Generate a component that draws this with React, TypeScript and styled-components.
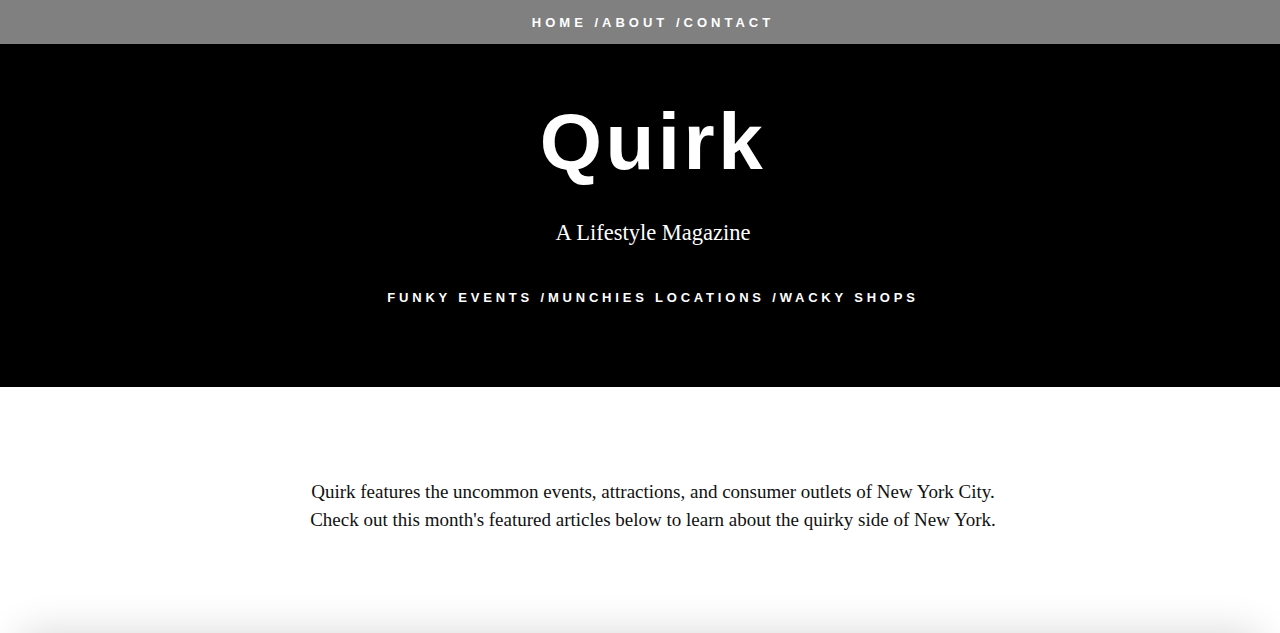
import React from "react";
import styled, { createGlobalStyle } from "styled-components";

const Global = createGlobalStyle`
  html, body { margin: 0; padding: 0; background: #fff; }
  body { font-family: "Liberation Serif", serif; overflow-x: hidden; }
`;

const TopNav = styled.nav`
  height: 44px;
  background: #808080;
  display: flex;
  align-items: center;
  justify-content: center;
  padding-left: 26px;
`;

const NavList = styled.ul<{ $spacing?: number }>`
  list-style: none;
  margin: 0;
  padding: 0;
  display: flex;
  font-family: "Liberation Sans", Arial, sans-serif;
  font-weight: 700;
  font-size: 13px;
  letter-spacing: ${(p) => p.$spacing ?? 4}px;
  color: #fff;
  text-transform: uppercase;
`;

const NavItem = styled.li`
  white-space: pre;
`;

const Hero = styled.header`
  background: #000;
  color: #fff;
  height: 343px;
  display: flex;
  flex-direction: column;
  align-items: center;
  padding: 51px 0 0 26px;
  box-sizing: border-box;
`;

const Title = styled.h1`
  margin: 0;
  font-family: "Liberation Sans", Arial, sans-serif;
  font-weight: 700;
  font-size: 80px;
  letter-spacing: 3.5px;
  line-height: 94px;
`;

const Subtitle = styled.p`
  margin: 32px 0 0;
  font-family: "Liberation Serif", serif;
  font-size: 22.5px;
  line-height: 24px;
`;

const SubNavWrap = styled.div`
  margin-top: 45px;
`;

const Intro = styled.section`
  padding: 91px 20px 0 46px;
  height: 220px;
  box-sizing: border-box;
  text-align: center;
`;

const IntroText = styled.p`
  margin: 0;
  font-family: "Liberation Serif", serif;
  font-size: 19px;
  line-height: 28px;
  color: #111;
`;

const Card = styled.section`
  margin: 26px 20px 0;
  height: 400px;
  background: #fff;
  border-radius: 12px;
  box-shadow: 0 0 40px rgba(0, 0, 0, 0.16);
`;

const topLinks = ["Home /", "About /", "Contact"];
const subLinks = ["Funky Events /", "Munchies Locations /", "Wacky Shops"];

export default function App() {
  return (
    <>
      <Global />
      <TopNav>
        <NavList>
          {topLinks.map((l) => (
            <NavItem key={l}>{l}</NavItem>
          ))}
        </NavList>
      </TopNav>
      <Hero>
        <Title>Quirk</Title>
        <Subtitle>A Lifestyle Magazine</Subtitle>
        <SubNavWrap>
          <NavList $spacing={3.8}>
            {subLinks.map((l) => (
              <NavItem key={l}>{l}</NavItem>
            ))}
          </NavList>
        </SubNavWrap>
      </Hero>
      <Intro>
        <IntroText>
          Quirk features the uncommon events, attractions, and consumer outlets of New York City.
          <br />
          Check out this month's featured articles below to learn about the quirky side of New York.
        </IntroText>
      </Intro>
      <Card />
    </>
  );
}
